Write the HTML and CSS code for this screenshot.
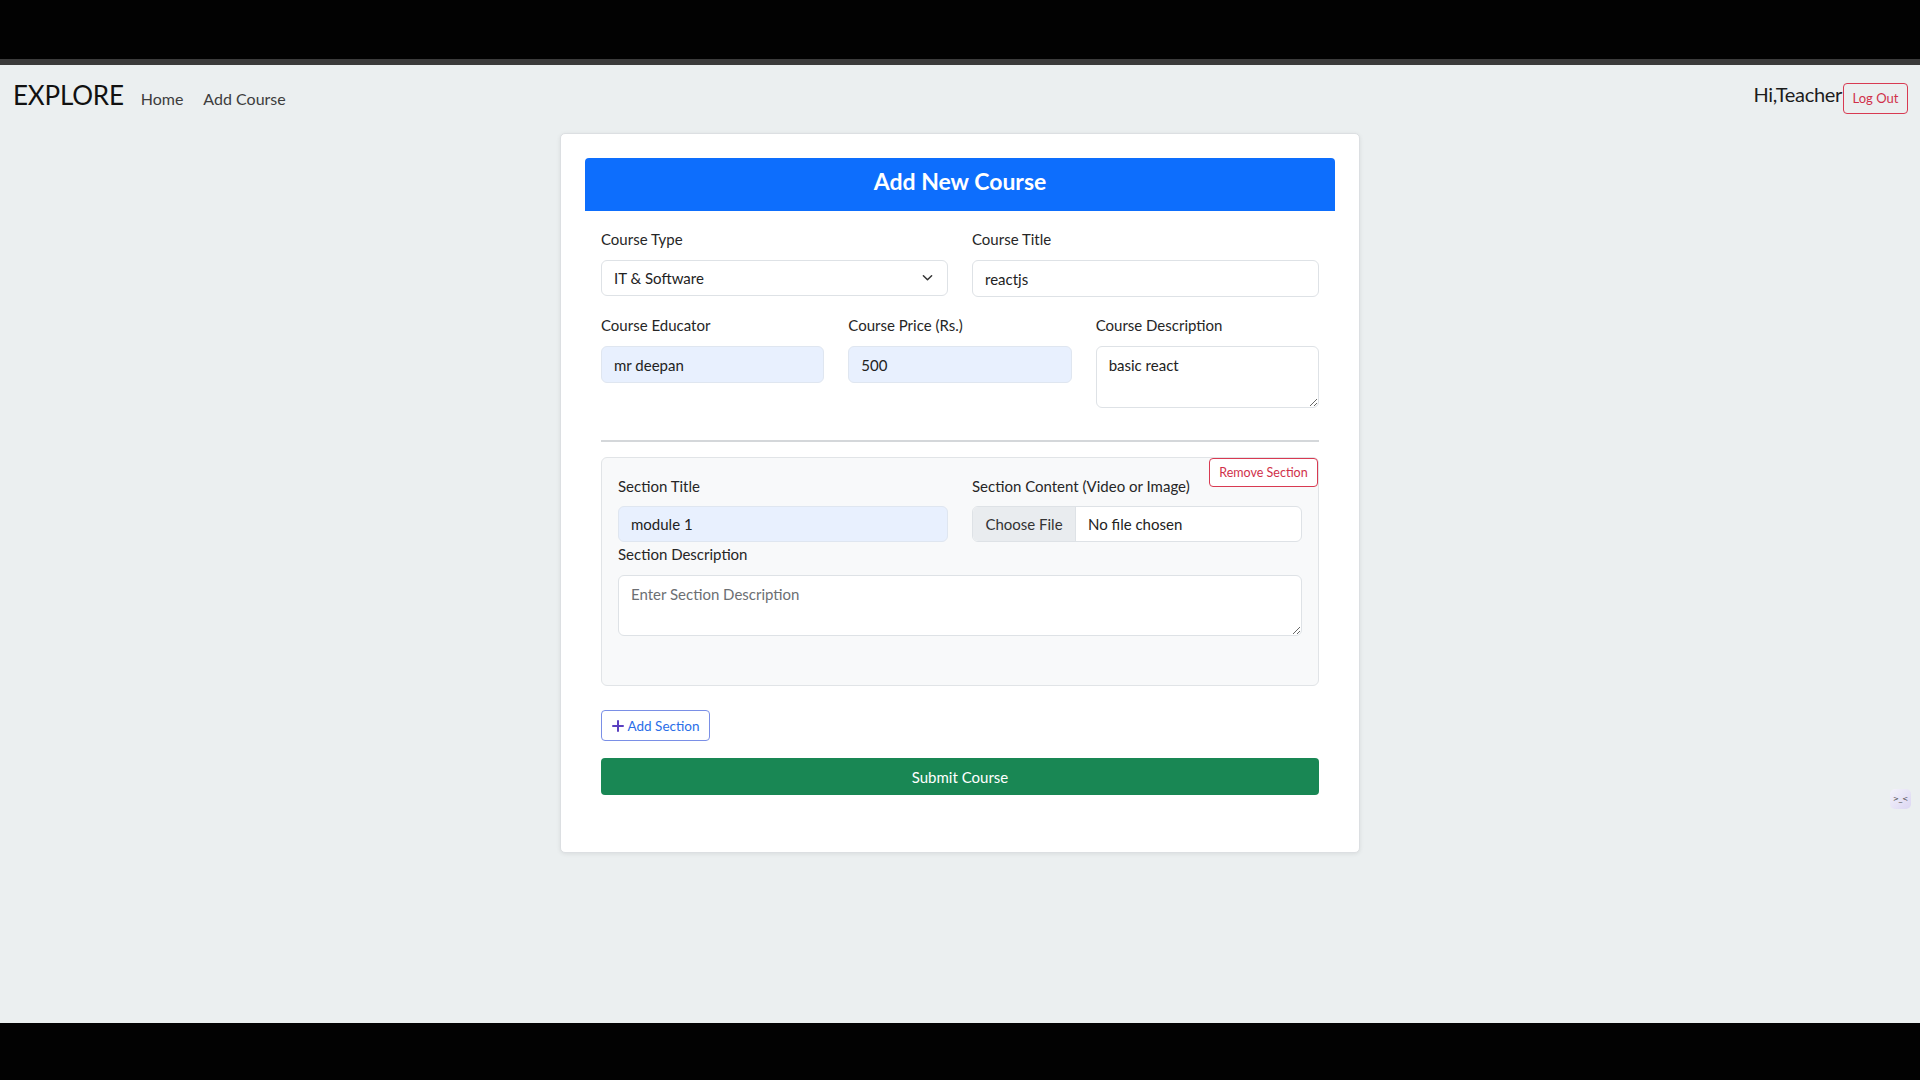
FILE: index.html
```html
<!DOCTYPE html>
<html lang="en">
<head>
<meta charset="utf-8">
<title>Add Course</title>
<link rel="stylesheet" href="styles.css">
</head>
<body>
<div class="topbar"></div>
<div class="topline"></div>
<div class="page">
  <nav class="navbar">
    <div class="nav-left">
      <span class="brand">EXPLORE</span>
      <a class="nav-link">Home</a>
      <a class="nav-link">Add Course</a>
    </div>
    <div class="nav-right">
      <span class="greet">Hi,Teacher</span>
      <button class="btn-logout">Log Out</button>
    </div>
  </nav>

  <div class="card">
    <div class="card-header">Add New Course</div>
    <form class="form">
      <div class="row two">
        <div class="group">
          <label class="label">Course Type</label>
          <select class="control select">
            <option>IT &amp; Software</option>
          </select>
        </div>
        <div class="group">
          <label class="label">Course Title</label>
          <input class="control" type="text" value="reactjs">
        </div>
      </div>
      <div class="row three">
        <div class="group">
          <label class="label">Course Educator</label>
          <input class="control filled" type="text" value="mr deepan">
        </div>
        <div class="group">
          <label class="label">Course Price (Rs.)</label>
          <input class="control filled" type="text" value="500">
        </div>
        <div class="group">
          <label class="label">Course Description</label>
          <textarea class="control area-sm">basic react</textarea>
        </div>
      </div>
      <hr class="divider">
      <div class="section">
        <button type="button" class="btn-remove">Remove Section</button>
        <div class="row two sec-row">
          <div class="group">
            <label class="label">Section Title</label>
            <input class="control filled" type="text" value="module 1">
          </div>
          <div class="group">
            <label class="label">Section Content (Video or Image)</label>
            <div class="control file">
              <span class="file-btn">Choose File</span>
              <span class="file-name">No file chosen</span>
            </div>
          </div>
        </div>
        <label class="label">Section Description</label>
        <textarea class="control area-lg" placeholder="Enter Section Description"></textarea>
      </div>
      <button type="button" class="btn-add">
        <svg width="12" height="12" viewBox="0 0 12 12"><path d="M6 1v10M1 6h10" stroke="#5a3fc0" stroke-width="2" stroke-linecap="round"/></svg>
        Add Section
      </button>
      <button type="button" class="btn-submit">Submit Course</button>
    </form>
  </div>
  <div class="widget">&gt;_&lt;</div>
</div>
<div class="bottombar"></div>
</body>
</html>
```
FILE: styles.css
```css
* { box-sizing: border-box; }
html, body { margin: 0; padding: 0; }
body {
  font-family: Lato, "Open Sans", sans-serif;
  background: #000;
  color: #212529;
  width: 1920px;
  height: 1080px;
  overflow: hidden;
}
.topbar { height: 59px; background: #020202; }
.topline { height: 6px; background: #3b3b3b; }
.bottombar { height: 57px; background: #020202; }
.page {
  height: 958px;
  background: #ebeff0;
  position: relative;
}
.navbar {
  height: 60px;
  display: flex;
  align-items: center;
  justify-content: space-between;
  padding: 0 12px 0 13px;
}
.nav-left { display: flex; align-items: baseline; }
.brand {
  font-size: 26px;
  color: #111;
  margin-right: 17px;
  letter-spacing: -0.2px;
}
.nav-link {
  font-size: 16px;
  color: #3d3d3d;
  margin-right: 20px;
}
.nav-right { display: flex; align-items: center; }
.greet { font-size: 20px; color: #1c1c1c; letter-spacing: -0.3px; margin-top: -3px; }
.btn-logout {
  font-family: inherit;
  font-size: 13px;
  color: #d0304a;
  background: transparent;
  border: 1px solid #d83a52;
  border-radius: 4px;
  width: 65px;
  height: 31px;
  padding: 0;
  margin-left: 1px;
  margin-top: 6px;
}
.card {
  width: 800px;
  margin: 8px auto 0;
  background: #fff;
  border: 1px solid #dcdfe2;
  border-radius: 5px;
  box-shadow: 0 1px 4px rgba(0,0,0,0.08);
  padding: 24px 24px 57px;
}
.card-header {
  height: 53px;
  background: #0d6efd;
  color: #fff;
  font-size: 23px;
  font-weight: 700;
  display: flex;
  align-items: center;
  justify-content: center;
  padding-bottom: 8px;
  border-radius: 4px 4px 0 0;
}
.form { padding: 16px 16px 0; display: flex; flex-direction: column; }
.row { display: grid; gap: 24px; margin-bottom: 16px; }
.row.two { grid-template-columns: 1fr 1fr; }
.row.three { grid-template-columns: 1fr 1fr 1fr; align-items: start; }
.group { display: flex; flex-direction: column; }
.label {
  font-size: 15px;
  line-height: 24px;
  color: #262626;
  margin-bottom: 9px;
}
.control {
  font-family: inherit;
  font-size: 15px;
  color: #222;
  height: 37px;
  border: 1px solid #dee2e6;
  border-radius: 6px;
  background: #fff;
  padding: 0 12px;
  outline: none;
}
.filled { background: #e8f0fe; border-color: #dfe6f0; }
.select {
  appearance: none;
  -webkit-appearance: none;
  background-image: url("data:image/svg+xml,%3Csvg xmlns='http://www.w3.org/2000/svg' width='12' height='8' viewBox='0 0 12 8'%3E%3Cpath d='M1.5 1.5l4.5 4.5 4.5-4.5' fill='none' stroke='%23333' stroke-width='1.6' stroke-linecap='round' stroke-linejoin='round'/%3E%3C/svg%3E");
  background-repeat: no-repeat;
  background-position: right 14px center;
  background-size: 11px 8px;
  height: 36px;
}
textarea.control {
  padding: 7px 12px;
  resize: vertical;
  line-height: 1.5;
}
.area-sm { height: 62px; }
.divider {
  border: 0;
  border-top: 2px solid #d4d7da;
  margin: 16px 0 15px;
  width: 100%;
}
.section {
  position: relative;
  background: #f8f9fa;
  border: 1px solid #e1e4e7;
  border-radius: 6px;
  padding: 16px 16px 49px;
  display: flex;
  flex-direction: column;
}
.sec-row { margin-bottom: 0; }
.sec-row .label { margin-bottom: 8px; }
.sec-row .control { height: 36px; }
.btn-remove {
  position: absolute;
  top: 0;
  right: 0;
  width: 109px;
  height: 29px;
  font-family: inherit;
  font-size: 12.5px;
  color: #d0304a;
  background: #fff;
  border: 1px solid #d83a52;
  border-radius: 4px;
  padding: 0;
}
.file { display: flex; padding: 0; overflow: hidden; align-items: stretch; }
.file-btn {
  background: #e9ecef;
  border-right: 1px solid #dee2e6;
  width: 103px;
  display: flex;
  align-items: center;
  justify-content: center;
  color: #333;
}
.file-name { display: flex; align-items: center; padding-left: 12px; color: #222; }
.area-lg { height: 61px; }
.area-lg::placeholder { color: #6c6f73; }
.btn-add {
  align-self: flex-start;
  margin-top: 24px;
  height: 31px;
  width: 109px;
  font-family: inherit;
  font-size: 13.5px;
  color: #2a6ee8;
  background: #fff;
  border: 1px solid #7a8fe6;
  border-radius: 4px;
  display: flex;
  align-items: center;
  justify-content: center;
  gap: 4px;
  padding: 0;
}
.btn-submit {
  margin-top: 17px;
  height: 37px;
  width: 100%;
  font-family: inherit;
  font-size: 15px;
  color: #fff;
  background: #198754;
  border: 0;
  border-radius: 4px;
}
.widget {
  position: absolute;
  right: 9px;
  top: 724px;
  width: 21px;
  height: 20px;
  border-radius: 5px;
  background: linear-gradient(135deg, #f4f3fa, #dcd6f3);
  font-size: 7px;
  color: #444;
  display: flex;
  align-items: center;
  justify-content: center;
  font-family: "DejaVu Sans", sans-serif;
}
```
